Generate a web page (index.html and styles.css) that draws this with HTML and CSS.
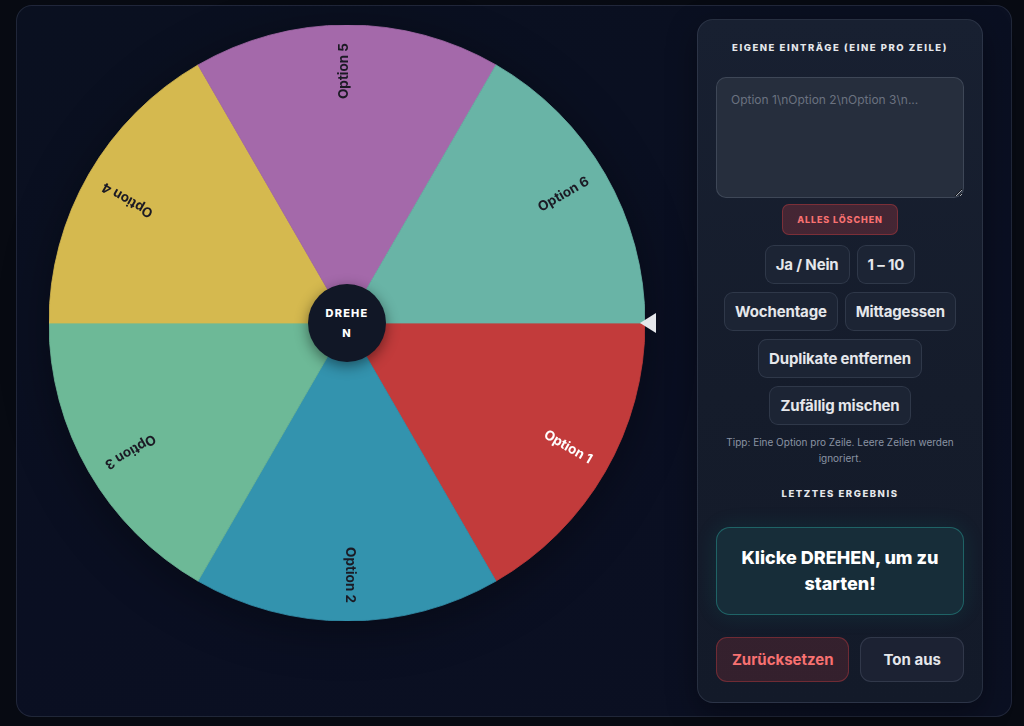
FILE: index.html
```html
<!DOCTYPE html>
<html lang="de">
<head>
<meta charset="utf-8">
<title>Glücksrad</title>
<link rel="stylesheet" href="styles.css">
</head>
<body>
<main class="card">
  <section class="wheel-area">
    <div class="wheel">
      <svg class="wheel-svg" viewBox="0 0 596 596" width="596" height="596">
        <path class="seg s1" d="M298,298 L596,298 A298,298 0 0 1 447,556.08 Z"/>
        <path class="seg s2" d="M298,298 L447,556.08 A298,298 0 0 1 149,556.08 Z"/>
        <path class="seg s3" d="M298,298 L149,556.08 A298,298 0 0 1 0,298 Z"/>
        <path class="seg s4" d="M298,298 L0,298 A298,298 0 0 1 149,39.92 Z"/>
        <path class="seg s5" d="M298,298 L149,39.92 A298,298 0 0 1 447,39.92 Z"/>
        <path class="seg s6" d="M298,298 L447,39.92 A298,298 0 0 1 596,298 Z"/>
        <g class="labels">
          <text class="light" transform="translate(298 298) rotate(30)" x="280" y="1" text-anchor="end">Option 1</text>
          <text transform="translate(298 298) rotate(90)" x="280" y="1" text-anchor="end">Option 2</text>
          <text transform="translate(298 298) rotate(150)" x="280" y="1" text-anchor="end">Option 3</text>
          <text transform="translate(298 298) rotate(210)" x="280" y="1" text-anchor="end">Option 4</text>
          <text transform="translate(298 298) rotate(270)" x="280" y="1" text-anchor="end">Option 5</text>
          <text transform="translate(298 298) rotate(330)" x="280" y="1" text-anchor="end">Option 6</text>
        </g>
      </svg>
      <button class="spin">DREHEN</button>
      <span class="pointer"></span>
    </div>
  </section>

  <aside class="panel">
    <h2 class="label">Eigene Einträge (eine pro Zeile)</h2>
    <textarea class="entries" placeholder="Option 1\nOption 2\nOption 3\n..."></textarea>
    <div class="center">
      <button class="btn-clear">Alles löschen</button>
    </div>
    <div class="presets">
      <div class="row"><button class="btn">Ja / Nein</button><button class="btn">1 – 10</button></div>
      <div class="row"><button class="btn">Wochentage</button><button class="btn">Mittagessen</button></div>
      <div class="row"><button class="btn">Duplikate entfernen</button></div>
      <div class="row"><button class="btn">Zufällig mischen</button></div>
    </div>
    <p class="tip">Tipp: Eine Option pro Zeile. Leere Zeilen werden ignoriert.</p>
    <h2 class="label result-label">Letztes Ergebnis</h2>
    <div class="result">Klicke DREHEN, um zu starten!</div>
    <div class="actions">
      <button class="btn-big reset">Zurücksetzen</button>
      <button class="btn-big sound">Ton aus</button>
    </div>
  </aside>
</main>
</body>
</html>
```

FILE: styles.css
```css
* { box-sizing: border-box; }

html, body {
  height: 100%;
}

body {
  margin: 0;
  padding: 5px 12px 9px 16px;
  background: #070a12;
  font-family: Inter, "Liberation Sans", Arial, sans-serif;
  color: #e5e7eb;
}

.card {
  height: 712px;
  border: 1px solid rgba(148, 163, 184, 0.16);
  border-radius: 16px;
  background: linear-gradient(160deg, #0a1020 0%, #0a0f22 60%, #0b1022 100%);
  padding: 13px 28px 14px 13px;
  display: grid;
  grid-template-columns: 1fr 286px;
  column-gap: 33px;
}

.wheel-area {
  display: flex;
  justify-content: center;
  padding-top: 6px;
}

.wheel {
  position: relative;
  width: 596px;
  height: 596px;
}

.wheel-svg {
  display: block;
  filter: drop-shadow(0 8px 24px rgba(0, 0, 0, 0.35));
}

.seg { stroke-width: 0.8; stroke-linejoin: round; }
.s1 { fill: #c23b3b; stroke: #c23b3b; }
.s2 { fill: #3393ae; stroke: #3393ae; }
.s3 { fill: #6db997; stroke: #6db997; }
.s4 { fill: #d5b94f; stroke: #d5b94f; }
.s5 { fill: #a469aa; stroke: #a469aa; }
.s6 { fill: #69b4a6; stroke: #69b4a6; }

.labels text {
  font-family: Inter, "Open Sans", "Liberation Sans", sans-serif;
  font-weight: 700;
  font-size: 13.5px;
  fill: #1b1a24;
}

.labels text.light {
  fill: #ffffff;
}

.spin {
  position: absolute;
  left: 259px;
  top: 259px;
  width: 78px;
  height: 78px;
  border-radius: 50%;
  border: none;
  background: #111726;
  color: #ffffff;
  font-family: Inter, "Liberation Sans", sans-serif;
  font-weight: 800;
  font-size: 11px;
  letter-spacing: 1.2px;
  line-height: 20px;
  padding: 0 16px;
  word-break: break-all;
  box-shadow: 0 4px 14px rgba(0, 0, 0, 0.45);
}

.pointer {
  position: absolute;
  left: 591px;
  top: 288px;
  width: 0;
  height: 0;
  border-top: 10px solid transparent;
  border-bottom: 10px solid transparent;
  border-right: 16px solid #e5e7eb;
}

.panel {
  height: 684px;
  border: 1px solid rgba(148, 163, 184, 0.16);
  border-radius: 16px;
  background: linear-gradient(180deg, #182031 0%, #151c2b 55%, #131a29 100%);
  box-shadow: 0 10px 30px rgba(0, 0, 0, 0.35);
  padding: 21px 18px 20px 18px;
  display: flex;
  flex-direction: column;
}

.label {
  margin: 0;
  text-align: center;
  font-size: 9.5px;
  font-weight: 800;
  letter-spacing: 1.55px;
  text-transform: uppercase;
  color: #e5e7eb;
  line-height: 14px;
}

.entries {
  margin-top: 22px;
  width: 100%;
  height: 124px;
  resize: vertical;
  border-radius: 10px;
  border: 1px solid rgba(148, 163, 184, 0.22);
  background: #262e3d;
  padding: 14px 14px;
  font-family: Inter, "Liberation Sans", sans-serif;
  font-size: 12px;
  color: #e5e7eb;
  outline: none;
}

.entries::placeholder {
  color: #6b7280;
}

.center {
  display: flex;
  justify-content: center;
  margin-top: 6px;
}

.btn-clear {
  height: 31px;
  padding: 0 14px;
  border-radius: 7px;
  border: 1px solid rgba(239, 68, 68, 0.32);
  background: rgba(190, 60, 70, 0.28);
  color: #f87171;
  font-family: Inter, "Liberation Sans", sans-serif;
  font-size: 9px;
  font-weight: 800;
  letter-spacing: 0.9px;
  text-transform: uppercase;
}

.presets {
  margin-top: 10px;
  display: flex;
  flex-direction: column;
  gap: 8px;
}

.row {
  display: flex;
  justify-content: center;
  gap: 7px;
}

.btn {
  height: 39px;
  padding: 0 10px;
  border-radius: 9px;
  border: 1px solid rgba(148, 163, 184, 0.16);
  background: #1c2434;
  color: #e5e7eb;
  font-family: Inter, "Liberation Sans", sans-serif;
  font-size: 15px;
  font-weight: 700;
  letter-spacing: -0.15px;
}

.tip {
  margin: 9px 4px 0;
  text-align: center;
  font-size: 10px;
  line-height: 16px;
  color: #8a93a3;
}

.result-label {
  margin-top: 21px;
}

.result {
  margin-top: 26px;
  height: 90px;
  border-radius: 14px;
  border: 1.5px solid rgba(45, 190, 175, 0.38);
  background: #172d39;
  box-shadow: 0 0 22px rgba(20, 184, 166, 0.12);
  display: flex;
  align-items: center;
  justify-content: center;
  text-align: center;
  padding: 0 18px;
  font-size: 18px;
  font-weight: 800;
  line-height: 26px;
  color: #ffffff;
}

.actions {
  margin-top: 22px;
  display: flex;
  gap: 11px;
}

.btn-big {
  height: 45px;
  border-radius: 11px;
  font-family: Inter, "Liberation Sans", sans-serif;
  font-size: 15px;
  font-weight: 700;
  padding: 0 8px;
}

.reset {
  flex: 1.35 1 0;
  border: 1px solid rgba(239, 68, 68, 0.32);
  background: rgba(150, 50, 60, 0.25);
  color: #f87171;
}

.sound {
  flex: 1 1 0;
  border: 1px solid rgba(148, 163, 184, 0.18);
  background: #1c2233;
  color: #e5e7eb;
}
```
